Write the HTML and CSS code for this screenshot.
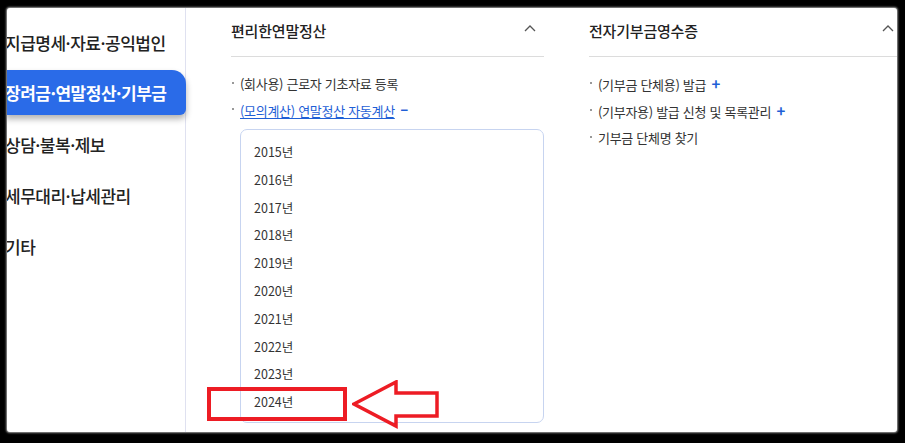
FILE: index.html
```html
<!DOCTYPE html>
<html lang="ko">
<head>
    <meta charset="UTF-8">
    <title>연말정산</title>
    <link rel="stylesheet" href="styles.css">
</head>
<body>
    <div class="panel">
        <nav class="sidebar">
            <div class="menu-item">지급명세·자료·공익법인</div>
            <div class="menu-item active">장려금·연말정산·기부금</div>
            <div class="menu-item">상담·불복·제보</div>
            <div class="menu-item">세무대리·납세관리</div>
            <div class="menu-item">기타</div>
        </nav>

        <main class="content">
            <section class="group">
                <div class="group-head">
                    <h2>편리한연말정산</h2>
                    <svg class="chevron" width="12" height="7" viewBox="0 0 12 7"><polyline points="1,6 6,1 11,6" fill="none" stroke="#555" stroke-width="1.3"/></svg>
                </div>
                <ul class="links">
                    <li>(회사용) 근로자 기초자료 등록</li>
                    <li><a href="#" class="open">(모의계산) 연말정산 자동계산</a> <span class="sign">–</span></li>
                </ul>
                <div class="years">
                    <div class="year">2015년</div>
                    <div class="year">2016년</div>
                    <div class="year">2017년</div>
                    <div class="year">2018년</div>
                    <div class="year">2019년</div>
                    <div class="year">2020년</div>
                    <div class="year">2021년</div>
                    <div class="year">2022년</div>
                    <div class="year">2023년</div>
                    <div class="year">2024년</div>
                </div>
            </section>

            <section class="group">
                <div class="group-head">
                    <h2>전자기부금영수증</h2>
                    <svg class="chevron" width="12" height="7" viewBox="0 0 12 7"><polyline points="1,6 6,1 11,6" fill="none" stroke="#555" stroke-width="1.3"/></svg>
                </div>
                <ul class="links">
                    <li>(기부금 단체용) 발급 <span class="sign">+</span></li>
                    <li>(기부자용) 발급 신청 및 목록관리 <span class="sign">+</span></li>
                    <li>기부금 단체명 찾기</li>
                </ul>
            </section>
        </main>

        <!-- 캡처 위 주석 표시 -->
        <div class="mark-box"></div>
        <svg class="mark-arrow" width="90" height="50" viewBox="0 0 90 50">
            <polygon points="2,24 44,2 44,13 85,13 85,36 44,36 44,46" fill="none" stroke="#ed1c24" stroke-width="3.5"/>
        </svg>
    </div>
</body>
</html>
```

FILE: styles.css
```css
/* 기본 */
body {
    margin: 0;
    width: 905px;
    height: 443px;
    background-color: #000;
    font-family: 'Noto Sans CJK KR', 'Noto Sans', sans-serif;
    color: #222;
    overflow: hidden;
}

.panel {
    position: relative;
    display: flex;
    margin: 8px 0 0 7px;
    width: 890px;
    height: 424px;
    background-color: #fff;
    border-radius: 3px;
    box-shadow: 0 0 2px 1px #999;
    overflow: hidden;
}

/* 왼쪽 메뉴 */
.sidebar {
    width: 178px;
    flex-shrink: 0;
    border-right: 1px solid #dfe1f0;
    padding-top: 12px;
    display: flex;
    flex-direction: column;
    gap: 6px;
}

.menu-item {
    height: 45px;
    line-height: 45px;
    font-size: 17px;
    font-weight: 500;
    letter-spacing: -0.5px;
    white-space: nowrap;
    margin-left: -2px;
    color: #222;
}

.menu-item.active {
    background-color: #2a6be8;
    color: #fff;
    font-weight: 700;
    border-radius: 0 14px 6px 0;
    box-shadow: 0 4px 6px rgba(0, 0, 0, 0.3);
    margin-right: -1px;
    position: relative;
    top: -1px;
}

/* 내용 */
.content {
    display: flex;
    gap: 45px;
    padding-left: 45px;
}

.group {
    width: 313px;
    flex-shrink: 0;
}

.group-head {
    display: flex;
    justify-content: space-between;
    align-items: center;
    height: 40px;
    padding: 0 8px 0 0;
    border-bottom: 1px solid #dcdcdc;
    margin-top: 8px;
}

.group-head h2 {
    margin: 0;
    font-size: 15px;
    font-weight: 500;
    letter-spacing: -0.2px;
    color: #222;
    position: relative;
    top: -6px;
}

.chevron {
    position: relative;
    top: -8px;
}

.links {
    list-style: none;
    margin: 14px 0 0;
    padding: 0;
}

.links li {
    position: relative;
    padding-left: 9px;
    font-size: 13px;
    line-height: 26px;
    color: #333;
    letter-spacing: -0.3px;
}

.links li::before {
    content: '';
    position: absolute;
    left: 1px;
    top: 11px;
    width: 2px;
    height: 2px;
    background-color: #999;
}

.links a {
    color: #1f5fd6;
    text-underline-offset: 2px;
}

.sign {
    color: #1f5fd6;
    font-size: 15px;
    font-weight: 700;
    margin-left: 2px;
}

.years {
    margin: 5px 0 0 9px;
    height: 294px;
    border: 1px solid #c7d4f0;
    border-radius: 7px;
    padding-top: 8px;
    box-sizing: border-box;
}

.year {
    height: 27.8px;
    line-height: 28px;
    padding-left: 13px;
    font-size: 12.5px;
    color: #333;
}

/* 빨간 표시 */
.mark-box {
    position: absolute;
    left: 200px;
    top: 379px;
    width: 132px;
    height: 26px;
    border: 4px solid #ed1c24;
}

.mark-arrow {
    position: absolute;
    left: 345px;
    top: 372px;
}
```
